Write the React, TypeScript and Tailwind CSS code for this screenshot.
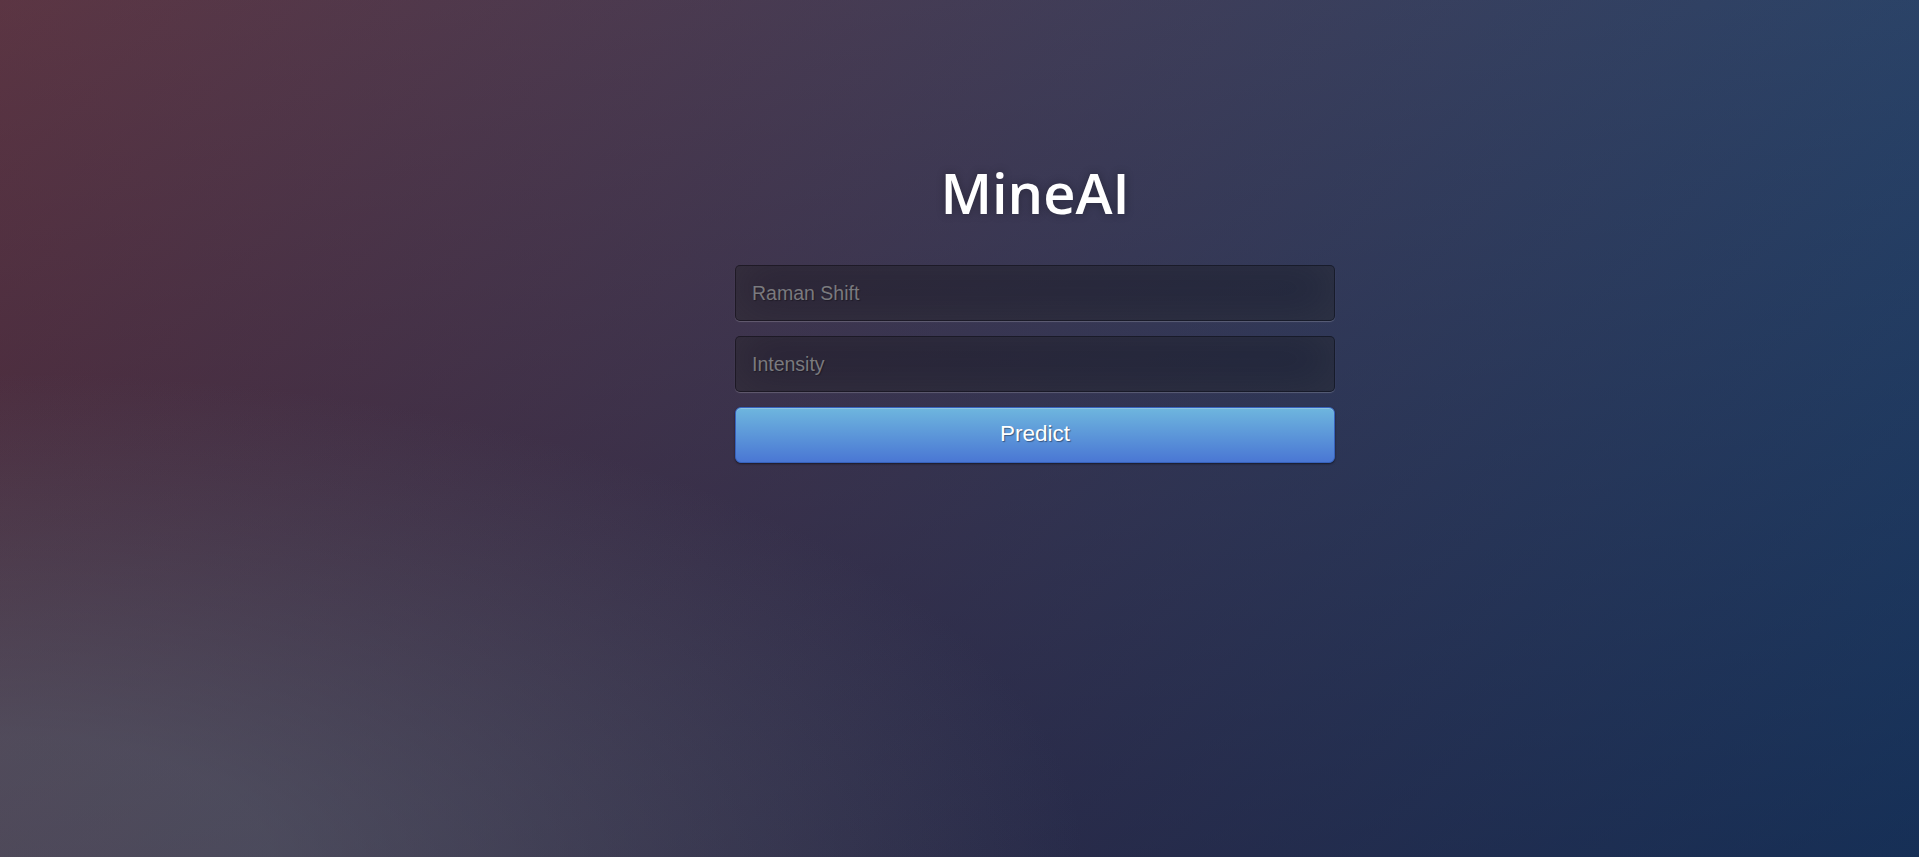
import React from "react";

export default function App() {
  return (
    <div className="h-screen w-full overflow-hidden bg-[radial-gradient(ellipse_farthest-corner_at_0%_100%,rgba(104,128,138,0.4)_10%,rgba(138,114,76,0)_40%),linear-gradient(to_bottom,rgba(57,173,219,0.25)_0%,rgba(42,60,87,0.4)_100%),linear-gradient(135deg,#670d10_0%,#092756_100%)]">
      <div className="ml-[735px] w-[600px] pt-[160px]">
        <h1 className="text-center font-['Open_Sans',sans-serif] text-[56px] font-semibold leading-[64px] tracking-[0px] text-white [text-shadow:0_0_10px_rgba(0,0,0,0.3)]">
          MineAI
        </h1>
        <form className="mt-[41px] flex flex-col gap-[15px]" onSubmit={(e) => e.preventDefault()}>
          <input
            type="text"
            placeholder="Raman Shift"
            className="box-border h-[56px] w-full rounded-[5px] border border-[rgba(0,0,0,0.3)] bg-[rgba(0,0,0,0.3)] px-[16px] font-['Liberation_Sans',Arial,sans-serif] text-[19.5px] text-white outline-none [text-shadow:1px_1px_1px_rgba(0,0,0,0.3)] shadow-[inset_0_-5px_45px_rgba(100,100,100,0.2),0_1px_1px_rgba(255,255,255,0.2)] placeholder:text-[#7a7a7e]"
          />
          <input
            type="text"
            placeholder="Intensity"
            className="box-border h-[56px] w-full rounded-[5px] border border-[rgba(0,0,0,0.3)] bg-[rgba(0,0,0,0.3)] px-[16px] font-['Liberation_Sans',Arial,sans-serif] text-[19.5px] text-white outline-none [text-shadow:1px_1px_1px_rgba(0,0,0,0.3)] shadow-[inset_0_-5px_45px_rgba(100,100,100,0.2),0_1px_1px_rgba(255,255,255,0.2)] placeholder:text-[#7a7a7e]"
          />
          <button
            type="submit"
            className="box-border h-[56px] w-full rounded-[6px] border border-[#3762bc] bg-[#4a77d4] bg-[linear-gradient(to_bottom,#6eb6de,#4a77d4)] pb-[2px] font-['Liberation_Sans',Arial,sans-serif] text-[22.5px] text-white [text-shadow:1px_1px_1px_rgba(0,0,0,0.4)] shadow-[inset_0_1px_0_rgba(255,255,255,0.2),0_1px_2px_rgba(0,0,0,0.5)]"
          >
            Predict
          </button>
        </form>
      </div>
    </div>
  );
}
